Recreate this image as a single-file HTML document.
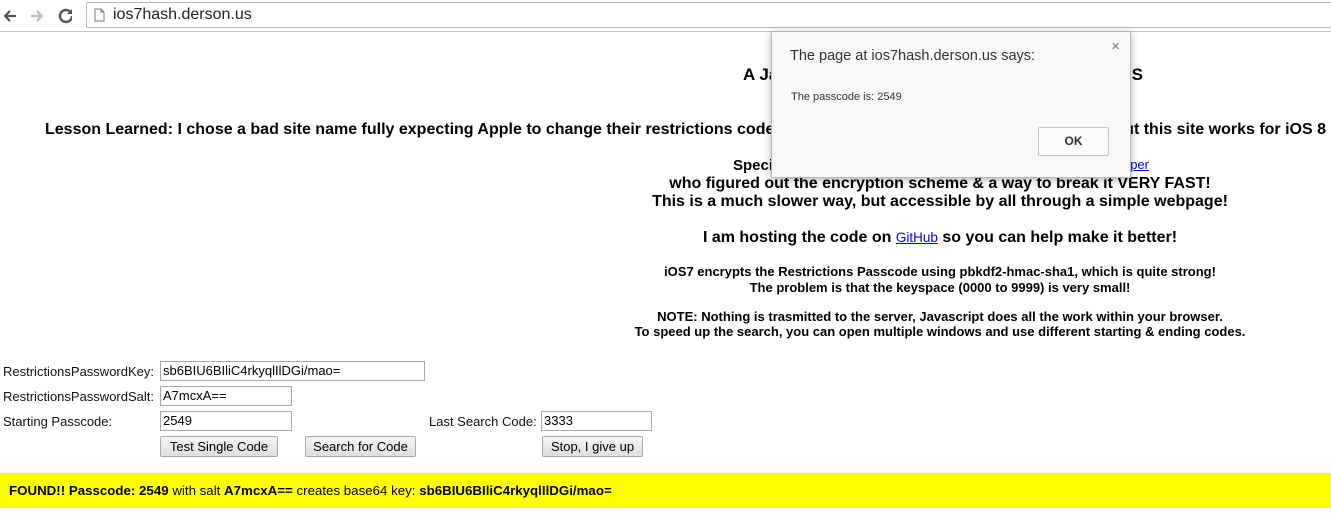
<!DOCTYPE html>
<html><head><meta charset="utf-8"><style>
body{margin:0;width:1331px;height:523px;overflow:hidden;background:#fff;font-family:"Liberation Sans",Arial,sans-serif;position:relative}
.bar{position:absolute;left:0;top:0;width:1331px;height:31px;background:#fff;border-bottom:1px solid #c8c8c8}
.url{position:absolute;left:86px;top:2px;width:1250px;height:26px;border:1px solid #b9b9b9;border-radius:2px;box-sizing:border-box;font-size:16px;line-height:24px;padding-left:26px;color:#222}
.c{position:absolute;left:0;width:1880px;text-align:center;font-weight:bold;color:#000;white-space:nowrap}
.p{position:absolute;font-weight:bold;white-space:nowrap}
.l{position:absolute;font-size:13px;color:#111;white-space:nowrap}
.in{position:absolute;height:20px;border:1px solid #a9a9a9;box-sizing:border-box;font-size:13px;line-height:18px;padding-left:2px;color:#000}
.btn{position:absolute;height:21px;border:1px solid #a9a9a9;border-radius:2px;background:linear-gradient(#f6f6f6,#dedede);font-size:13px;line-height:19px;text-align:center;box-sizing:border-box}
a{color:#00e;text-decoration:underline;font-weight:normal}
</style></head><body>
<div class="bar">
<svg style="position:absolute;left:2px;top:8px" width="70" height="16" viewBox="0 0 70 16">
<path d="M14 8H3M8 3L3 8l5 5" stroke="#555" stroke-width="2.2" fill="none"/>
<path d="M29 8h11M35 3l5 5-5 5" stroke="#bbb" stroke-width="2.2" fill="none"/>
<path d="M70 8a6 6 0 1 1-2-4.5" stroke="#555" stroke-width="2.4" fill="none"/><path d="M70 1v5h-5z" fill="#555"/>
</svg>
<div class="url"><svg style="position:absolute;left:7px;top:5px" width="11" height="14"><path d="M1 1h6l3 3v9H1z M7 1v3h3" stroke="#777" fill="#fff"/></svg>ios7hash.derson.us</div>
</div>
<div class="p" style="left:743px;top:65px;font-size:17px">A Javascript</div>
<div class="p" style="right:188px;top:65px;font-size:17px">PASSCODES</div>
<div class="p" style="left:45px;top:121px;font-size:16px">Lesson Learned: I chose a bad site name fully expecting Apple to change their restrictions code in iOS 8</div>
<div class="p" style="right:5px;top:121px;font-size:16px">but this site works for iOS 8</div>
<div class="p" style="left:733px;top:157px;font-size:15px">Special thanks to</div>
<div class="p" style="right:182px;top:157px;font-size:13px"><a>Ricky Cooper</a></div>
<div class="c" style="top:175px;font-size:16px">who figured out the encryption scheme &amp; a way to break it VERY FAST!</div>
<div class="c" style="top:193px;font-size:16px">This is a much slower way, but accessible by all through a simple webpage!</div>
<div class="c" style="top:229px;font-size:16px">I am hosting the code on <a style="font-size:13.5px">GitHub</a> so you can help make it better!</div>
<div class="c" style="top:264px;font-size:13px">iOS7 encrypts the Restrictions Passcode using pbkdf2-hmac-sha1, which is quite strong!</div>
<div class="c" style="top:280px;font-size:13px">The problem is that the keyspace (0000 to 9999) is very small!</div>
<div class="c" style="top:309px;font-size:13px">NOTE: Nothing is trasmitted to the server, Javascript does all the work within your browser.</div>
<div class="c" style="top:324px;font-size:13px">To speed up the search, you can open multiple windows and use different starting &amp; ending codes.</div>

<div class="l" style="left:3px;top:364px">RestrictionsPasswordKey:</div>
<div class="in" style="left:160px;top:361px;width:265px">sb6BIU6BIliC4rkyqlIlDGi/mao=</div>
<div class="l" style="left:3px;top:389px">RestrictionsPasswordSalt:</div>
<div class="in" style="left:160px;top:386px;width:132px">A7mcxA==</div>
<div class="l" style="left:3px;top:414px">Starting Passcode:</div>
<div class="in" style="left:160px;top:411px;width:132px">2549</div>
<div class="l" style="left:429px;top:414px">Last Search Code:</div>
<div class="in" style="left:541px;top:411px;width:111px">3333</div>
<div class="btn" style="left:160px;top:436px;width:118px">Test Single Code</div>
<div class="btn" style="left:305px;top:436px;width:111px">Search for Code</div>
<div class="btn" style="left:542px;top:436px;width:101px">Stop, I give up</div>

<div style="position:absolute;left:0;top:473px;width:1331px;height:35px;background:#ff0;font-size:13.3px;line-height:35px;padding-left:9px;box-sizing:border-box;white-space:nowrap"><b>FOUND!! Passcode: 2549</b> with salt <b>A7mcxA==</b> creates base64 key: <b>sb6BIU6BIliC4rkyqlIlDGi/mao=</b></div>

<div style="position:absolute;left:771px;top:31px;width:360px;height:147px;background:#f8f8f8;border:1px solid #b8b8b8;box-sizing:border-box;box-shadow:0 2px 8px rgba(0,0,0,.3);color:#333">
<div style="position:absolute;left:18px;top:16px;font-size:14.5px">The page at ios7hash.derson.us says:</div>
<div style="position:absolute;right:10px;top:6px;font-size:15px;color:#777">×</div>
<div style="position:absolute;left:19px;top:59px;font-size:11px">The passcode is: 2549</div>
<div style="position:absolute;left:266px;top:95px;width:71px;height:29px;border:1px solid #c4c4c4;border-radius:2px;background:#fbfbfb;box-sizing:border-box;text-align:center;line-height:27px;font-size:12px;font-weight:bold;color:#333">OK</div>
</div>
</body></html>
